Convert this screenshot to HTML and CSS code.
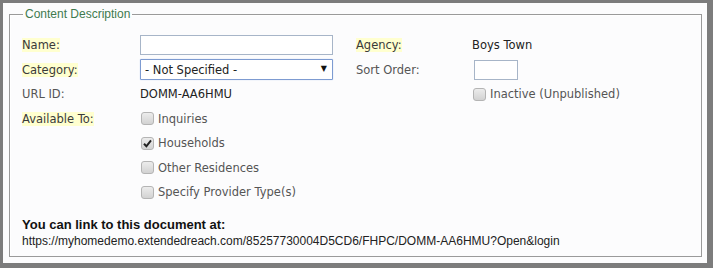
FILE: index.html
```html
<!DOCTYPE html>
<html>
<head>
<meta charset="utf-8">
<link rel="stylesheet" href="styles.css">
</head>
<body>
<div class="frame">
  <fieldset class="box">
    <legend class="legend">Content Description</legend>
    <div class="grid">
      <div class="cell"><span class="lbl hl">Name:</span></div>
      <div class="cell"><input class="txt name" type="text"></div>
      <div class="cell"><span class="lbl hl">Agency:</span></div>
      <div class="cell"><span class="val">Boys Town</span></div>

      <div class="cell"><span class="lbl hl">Category:</span></div>
      <div class="cell"><div class="selwrap"><select class="sel"><option>- Not Specified -</option></select><span class="arrow">▼</span></div></div>
      <div class="cell"><span class="lbl">Sort Order:</span></div>
      <div class="cell"><input class="txt sort" type="text"></div>

      <div class="cell"><span class="lbl">URL ID:</span></div>
      <div class="cell"><span class="val">DOMM-AA6HMU</span></div>
      <div class="cell"></div>
      <div class="cell"><span class="cb"></span><span class="opt">Inactive (Unpublished)</span></div>

      <div class="cell"><span class="lbl hl">Available To:</span></div>
      <div class="cell"><span class="cb"></span><span class="opt">Inquiries</span></div>
      <div class="cell"></div><div class="cell"></div>

      <div class="cell"></div>
      <div class="cell"><span class="cb"><svg width="9" height="9" viewBox="0 0 9 9"><path d="M1 4.8 L3.4 7.3 L8 1.4" fill="none" stroke="#222" stroke-width="2"/></svg></span><span class="opt">Households</span></div>
      <div class="cell"></div><div class="cell"></div>

      <div class="cell"></div>
      <div class="cell"><span class="cb"></span><span class="opt">Other Residences</span></div>
      <div class="cell"></div><div class="cell"></div>

      <div class="cell"></div>
      <div class="cell wide"><span class="cb"></span><span class="opt">Specify Provider Type(s)</span></div>
      <div class="cell"></div>
    </div>
    <div class="link">
      <div class="linkhead">You can link to this document at:</div>
      <div class="linkurl">https://myhomedemo.extendedreach.com/85257730004D5CD6/FHPC/DOMM-AA6HMU?Open&amp;login</div>
    </div>
  </fieldset>
</div>
</body>
</html>
```
FILE: styles.css
```css
html, body { margin: 0; padding: 0; }
body { width: 713px; height: 268px; overflow: hidden; background: #7c7c7c; }
.frame {
  box-sizing: border-box;
  width: 713px; height: 268px;
  border-style: solid;
  border-color: #7c7c7c;
  border-width: 3px 6px 5px 3px;
  background: #fcfcfd;
  padding: 4px 5px 5px 6px;
}
.box {
  margin: 0;
  height: 250px;
  box-sizing: border-box;
  border: 1px solid #9a9a9a;
  box-shadow: 1px 1px 0 #fff inset;
  padding: 12px 12px 0 12px;
}
.legend {
  margin-left: 1px;
  padding: 0 2px 0 2px;
  font-family: "Liberation Sans", Arial, sans-serif;
  font-size: 12px;
  color: #3f7a4f;
  line-height: 14px;
}
.grid {
  display: grid;
  grid-template-columns: 118px 216px 116px 1fr;
  grid-auto-rows: 24.5px;
}
.cell { display: flex; align-items: center; min-width: 0; }
.wide { grid-column: 2 / span 2; }
.lbl, .val, .opt {
  font-family: "DejaVu Sans", Verdana, sans-serif;
  font-size: 11.5px;
  line-height: 14px;
}
.lbl { color: #555; }
.hl { background: #ffffcf; color: #3a3a3a; }
.val { color: #222; }
.opt { color: #555; margin-left: 4px; }
.txt {
  box-sizing: border-box;
  height: 20px;
  border: 1px solid #a7b5c8;
  background: #fff;
  margin: 0; padding: 0;
  outline: none;
}
.name { width: 193px; }
.sort { width: 44px; margin-left: 2px; height: 20px; }
.selwrap { position: relative; width: 193px; height: 21px; }
.sel {
  appearance: none; -webkit-appearance: none;
  box-sizing: border-box;
  width: 193px; height: 21px;
  border: 1px solid #7d9bd1;
  box-shadow: 0 0 1px #9bb6e6;
  border-radius: 1px;
  background: #fff;
  margin: 0;
  padding: 0 0 0 4px;
  font-family: "DejaVu Sans", Verdana, sans-serif;
  font-size: 11.5px;
  color: #222;
}
.arrow {
  position: absolute; right: 6px; top: 4px;
  font-size: 8px; color: #111; line-height: 12px;
  font-family: "DejaVu Sans", sans-serif;
}
.cb {
  box-sizing: border-box;
  width: 13px; height: 13px;
  border: 1px solid #b4b4b4;
  border-radius: 3px;
  background: linear-gradient(#ececec, #d2d2d2);
  display: inline-flex; align-items: center; justify-content: center;
  margin-left: 1px;
}
.link { margin-top: 12px; font-family: "Liberation Sans", Arial, sans-serif; line-height: 16px; color: #111; }
.linkhead { font-weight: bold; font-size: 13px; color: #111; }
.linkurl { color: #222; font-size: 12px; }
```
